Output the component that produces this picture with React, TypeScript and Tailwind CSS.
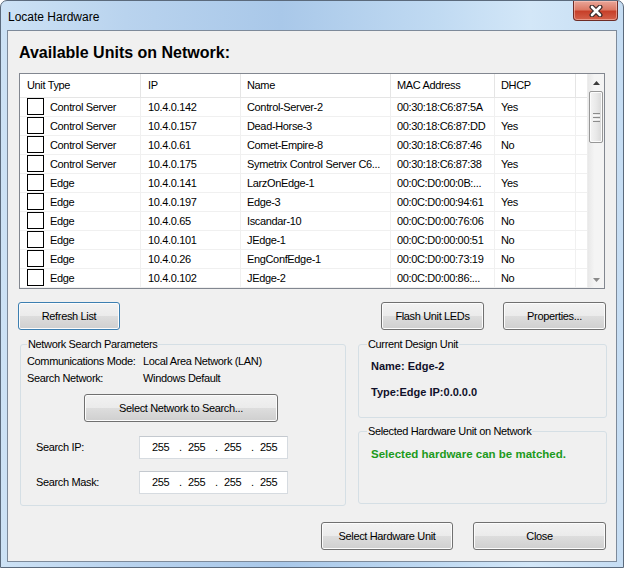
import React from "react";

const rows: string[][] = [
  ["Control Server", "10.4.0.142", "Control-Server-2", "00:30:18:C6:87:5A", "Yes"],
  ["Control Server", "10.4.0.157", "Dead-Horse-3", "00:30:18:C6:87:DD", "Yes"],
  ["Control Server", "10.4.0.61", "Comet-Empire-8", "00:30:18:C6:87:46", "No"],
  ["Control Server", "10.4.0.175", "Symetrix Control Server C6...", "00:30:18:C6:87:38", "Yes"],
  ["Edge", "10.4.0.141", "LarzOnEdge-1", "00:0C:D0:00:0B:...", "Yes"],
  ["Edge", "10.4.0.197", "Edge-3", "00:0C:D0:00:94:61", "Yes"],
  ["Edge", "10.4.0.65", "Iscandar-10", "00:0C:D0:00:76:06", "No"],
  ["Edge", "10.4.0.101", "JEdge-1", "00:0C:D0:00:00:51", "No"],
  ["Edge", "10.4.0.26", "EngConfEdge-1", "00:0C:D0:00:73:19", "No"],
  ["Edge", "10.4.0.102", "JEdge-2", "00:0C:D0:00:86:...", "No"],
];

function Btn({
  children,
  className,
  focus = false,
}: {
  children: React.ReactNode;
  className: string;
  focus?: boolean;
}) {
  return (
    <div
      className={`h-[28px] flex items-center justify-center rounded-[3px] border ${
        focus ? "border-[#3c7fb1]" : "border-[#707070]"
      } bg-[linear-gradient(to_bottom,#f2f2f2_0%,#ebebeb_50%,#dddddd_51%,#cfcfcf_100%)] shadow-[inset_0_0_0_1px_#fcfcfc] text-black ${className}`}
    >
      {children}
    </div>
  );
}

function IpBox() {
  return (
    <div className="w-[149px] h-[23px] bg-white border border-[#d6dbe0] border-t-[#c4c9cf] flex items-center pl-[12px]">
      <span className="w-[27px]">255</span>
      <span className="w-[9px]">.</span>
      <span className="w-[27px]">255</span>
      <span className="w-[9px]">.</span>
      <span className="w-[27px]">255</span>
      <span className="w-[9px]">.</span>
      <span className="w-[27px]">255</span>
    </div>
  );
}

function Scrollbar() {
  return (
    <div className="w-[17px] h-full flex flex-col bg-[linear-gradient(to_right,#e8e8e8,#f4f4f4_40%,#f4f4f4)] border-l border-[#ededed]">
      <div className="h-[17px] flex items-center justify-center">
        <svg width="7" height="4" viewBox="0 0 7 4">
          <path d="M0 4 L3.5 0 L7 4 Z" fill="#3b3b3b" />
        </svg>
      </div>
      <div className="mx-[1px] h-[52px] rounded-[2px] border border-[#979797] bg-[linear-gradient(to_right,#f4f4f4,#e9e9e9_50%,#d8d8d8)] shadow-[inset_0_0_0_1px_#fbfbfb] flex flex-col items-center justify-center gap-[1px]">
        <div className="w-[7px] h-[1px] bg-[#8c8c8c]" />
        <div className="w-[7px] h-[1px] bg-[#f8f8f8]" />
        <div className="w-[7px] h-[1px] bg-[#8c8c8c]" />
        <div className="w-[7px] h-[1px] bg-[#f8f8f8]" />
        <div className="w-[7px] h-[1px] bg-[#8c8c8c]" />
      </div>
      <div className="flex-1" />
      <div className="h-[17px] flex items-center justify-center">
        <svg width="7" height="4" viewBox="0 0 7 4">
          <path d="M0 0 L7 0 L3.5 4 Z" fill="#8a8a8a" />
        </svg>
      </div>
    </div>
  );
}

export default function App() {
  const colW = ["w-[121px]", "w-[100px]", "w-[150px]", "w-[104px]", "w-[81px]"];
  return (
    <div className="w-[624px] h-[568px] font-['Liberation_Sans',Arial,sans-serif] text-black">
      <div className="relative w-[624px] h-[568px] rounded-t-[7px] border border-[#5b6a7c] bg-[linear-gradient(to_right,#cde2f5_0%,#b9d3ee_20%,#a9c8e9_45%,#c0daf2_70%,#d3e7f8_85%,#c6ddf3_100%)] flex flex-col">
        {/* title bar */}
        <div className="h-[29px] flex items-center pl-[7px] pt-[2px] text-[12px] leading-[14px]">
          Locate Hardware
        </div>
        <div className="absolute top-0 right-[5px] w-[45px] h-[20px] rounded-b-[4px] border border-t-0 border-[#6e2c26] bg-[linear-gradient(to_bottom,#e9a699_0%,#dc7a66_45%,#c7402a_55%,#d4614b_100%)] shadow-[inset_0_0_0_1px_rgba(255,210,200,0.5)] flex items-center justify-center">
          <svg width="16" height="12" viewBox="0 0 16 12">
            <path d="M4 2 L12 10 M12 2 L4 10" stroke="#3a2a2a" strokeWidth="5" strokeLinecap="round" />
            <path d="M4 2 L12 10 M12 2 L4 10" stroke="#ffffff" strokeWidth="2.6" strokeLinecap="round" />
          </svg>
        </div>

        {/* content */}
        <div className="mx-[6px] h-[532px] border border-[#7d8a9a] bg-[#f0f0f0] flex flex-col text-[11px] leading-[13px] tracking-[-0.35px]">
          <div className="ml-[11px] mt-[13px] h-[18px] text-[16px] leading-[18px] font-bold tracking-normal">
            Available Units on Network:
          </div>

          {/* list */}
          <div className="ml-[11px] mt-[11px] w-[586px] h-[216px] border border-[#828790] bg-white flex overflow-hidden">
            <div className="flex-1 flex flex-col overflow-hidden">
              <div className="h-[24px] shrink-0 flex border-b border-[#e5e5e5]">
                {["Unit Type", "IP", "Name", "MAC Address", "DHCP"].map((h, i) => (
                  <div
                    key={h}
                    className={`${colW[i]} shrink-0 h-full flex items-center border-r border-[#e5e5e5] ${
                      i < 2 ? "pl-[7px]" : "pl-[6px]"
                    }`}
                  >
                    {h}
                  </div>
                ))}
                <div className="flex-1" />
              </div>
              {rows.map((r, ri) => (
                <div key={ri} className="h-[19px] shrink-0 flex border-b border-[#f0f0f0]">
                  <div className={`${colW[0]} shrink-0 h-full flex items-start border-r border-[#f0f0f0]`}>
                    <div className="ml-[7px] w-[17px] h-[17px] border border-black bg-white shrink-0" />
                    <span className="ml-[6px] self-center">{r[0]}</span>
                  </div>
                  {r.slice(1).map((c, ci) => (
                    <div
                      key={ci}
                      className={`${colW[ci + 1]} shrink-0 h-full flex items-center border-r border-[#f0f0f0] whitespace-nowrap overflow-hidden ${
                        ci === 0 ? "pl-[7px]" : "pl-[6px]"
                      }`}
                    >
                      {c}
                    </div>
                  ))}
                  <div className="flex-1" />
                </div>
              ))}
            </div>
            <Scrollbar />
          </div>

          {/* action buttons */}
          <div className="mt-[13px] flex">
            <Btn focus className="ml-[10px] w-[102px]">Refresh List</Btn>
            <Btn className="ml-[261px] w-[103px]">Flash Unit LEDs</Btn>
            <Btn className="ml-[19px] w-[103px]">Properties...</Btn>
          </div>

          {/* groups */}
          <div className="mt-[8px] flex items-start">
            <fieldset className="ml-[12px] w-[326px] h-[168px] border border-[#d5dfe5] rounded-[3px]">
              <legend className="ml-[6px] px-[1px]">Network Search Parameters</legend>
              <div className="pl-[6px] mt-[2px] flex flex-col">
                <div className="h-[17px] flex items-center">
                  <span className="w-[116px]">Communications Mode:</span>
                  <span>Local Area Network (LAN)</span>
                </div>
                <div className="h-[17px] flex items-center">
                  <span className="w-[116px]">Search Network:</span>
                  <span>Windows Default</span>
                </div>
                <Btn className="mt-[7px] ml-[57px] w-[194px]">Select Network to Search...</Btn>
                <div className="mt-[14px] flex items-center">
                  <span className="ml-[9px] w-[103px]">Search IP:</span>
                  <IpBox />
                </div>
                <div className="mt-[12px] flex items-center">
                  <span className="ml-[9px] w-[103px]">Search Mask:</span>
                  <IpBox />
                </div>
              </div>
            </fieldset>

            <div className="ml-[12px] flex flex-col">
              <fieldset className="w-[249px] h-[80px] border border-[#d5dfe5] rounded-[3px]">
                <legend className="ml-[8px] px-[1px]">Current Design Unit</legend>
                <div className="pl-[12px] mt-[9px] font-bold tracking-normal flex flex-col text-[#10102a]">
                  <div className="h-[13px]">Name: Edge-2</div>
                  <div className="h-[13px] mt-[13px]">Type:Edge IP:0.0.0.0</div>
                </div>
              </fieldset>
              <fieldset className="mt-[7px] w-[249px] h-[79px] border border-[#d5dfe5] rounded-[3px]">
                <legend className="ml-[8px] px-[1px]">Selected Hardware Unit on Network</legend>
                <div className="pl-[12px] mt-[10px] font-bold tracking-normal text-[11.5px] text-[#1c9a1c]">
                  Selected hardware can be matched.
                </div>
              </fieldset>
            </div>
          </div>

          {/* bottom buttons */}
          <div className="mt-[16px] flex">
            <Btn className="ml-[313px] w-[132px]">Select Hardware Unit</Btn>
            <Btn className="ml-[20px] w-[133px]">Close</Btn>
          </div>
        </div>
      </div>
    </div>
  );
}
